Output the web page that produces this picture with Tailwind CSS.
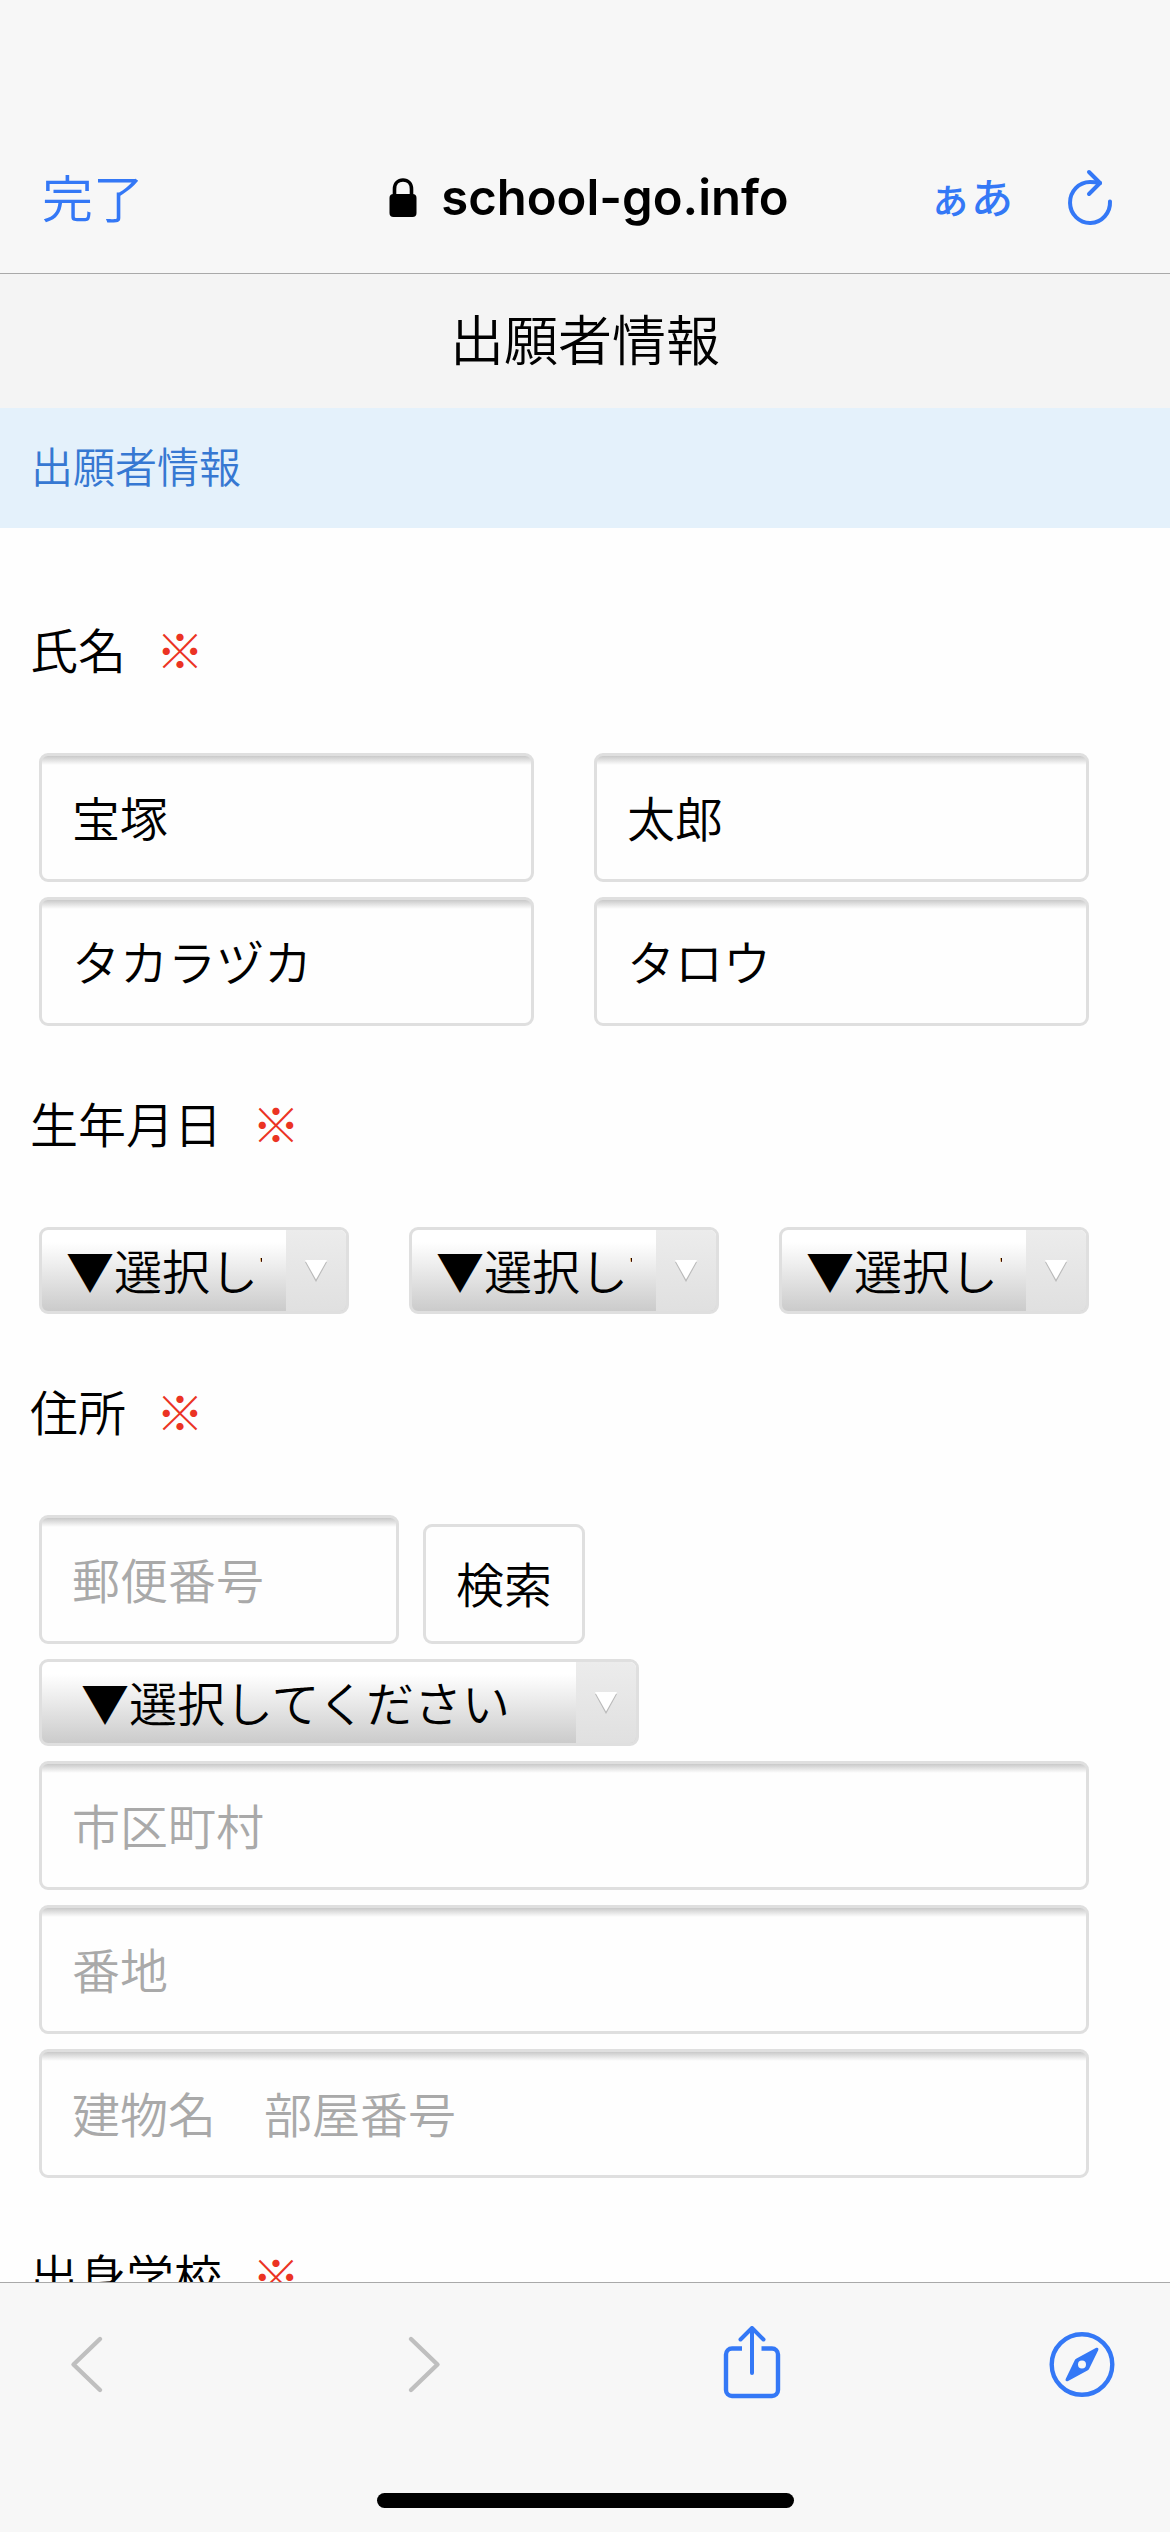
<!DOCTYPE html>
<html lang="ja">
<head>
  <meta charset="UTF-8" />
  <meta name="viewport" content="width=device-width, initial-scale=1" />
  <title>出願者情報</title>
  <script src="https://cdn.jsdelivr.net/npm/@tailwindcss/browser@4"></script>
</head>
<body class="flex h-screen flex-col overflow-hidden bg-[#fefefe] font-['Noto_Sans_CJK_JP',sans-serif] text-[48px] leading-[72px] font-[350] text-black">
  <!-- Browser bar -->
  <header class="shrink-0 border-b border-[#a9a9a9] bg-[#f7f7f7] pt-[123px]">
    <div class="grid h-[150px] grid-cols-[1fr_auto_1fr] items-center px-[42px]">
      <button type="button" class="justify-self-start pb-1 text-[51px] text-[#3478f6]">完了</button>
      <div class="flex items-center gap-6 pl-2">
        <svg class="h-10 w-7" viewBox="0 0 28 40" fill="none">
          <rect x="0.5" y="16" width="27" height="23" rx="4" fill="#000" />
          <path d="M5.500 18V11C5.500 5.500 9 2 14 2s8.500 3.500 8.500 9v7" stroke="#000" stroke-width="3.600" />
        </svg>
        <span class="font-[Inter,sans-serif] text-[49px] font-semibold">school-go.info</span>
      </div>
      <div class="mr-[15px] flex items-center justify-self-end gap-[54px] text-[#3478f6]">
        <button type="button" aria-label="表示設定" class="pb-1 text-[42px] font-medium">ぁあ</button>
        <button type="button" aria-label="再読み込み">
          <svg class="h-[60px] w-[46px]" viewBox="0 0 46 60" fill="none" stroke="currentColor" stroke-width="4" stroke-linecap="round" stroke-linejoin="round">
            <path d="M43 33.500A20 20.500 0 1 1 23 14q5 0 10 1" />
            <path d="M22 4 33 15 22 26" />
          </svg>
        </button>
      </div>
    </div>
  </header>

  <!-- Page -->
  <main class="min-h-0 flex-1 overflow-hidden">
    <h1 class="bg-[#f4f4f4] pt-7 pb-[34px] text-center text-[54px]">出願者情報</h1>
    <h2 class="bg-[#e4f1fb] px-[31px] pt-[21px] pb-[27px] text-[42px] text-[#3678d2]">出願者情報</h2>

    <form class="pt-6">
      <!-- Name -->
      <section class="pt-[60px]">
        <div class="flex gap-[30px] px-[30px]"><label for="sei">氏名</label><span class="text-[#eb3323]">※</span></div>
        <div class="mt-[69px] mr-[81px] ml-[39px] grid grid-cols-2 gap-x-[60px] gap-y-[15px]">
          <input id="sei" type="text" value="宝塚" class="h-[129px] w-full min-w-0 rounded-[9px] border-3 border-[#dfdfdf] bg-[linear-gradient(#c9c9c9,#fefefe_9px)] px-[30px] pb-1" />
          <input aria-label="名" type="text" value="太郎" class="h-[129px] w-full min-w-0 rounded-[9px] border-3 border-[#dfdfdf] bg-[linear-gradient(#c9c9c9,#fefefe_9px)] px-[30px] pb-1" />
          <input aria-label="セイ" type="text" value="タカラヅカ" class="h-[129px] w-full min-w-0 rounded-[9px] border-3 border-[#dfdfdf] bg-[linear-gradient(#c9c9c9,#fefefe_9px)] px-[30px] pb-1" />
          <input aria-label="メイ" type="text" value="タロウ" class="h-[129px] w-full min-w-0 rounded-[9px] border-3 border-[#dfdfdf] bg-[linear-gradient(#c9c9c9,#fefefe_9px)] px-[30px] pb-1" />
        </div>
      </section>

      <!-- Birthday -->
      <section class="pt-[60px]">
        <div class="flex gap-[30px] px-[30px]"><label for="year">生年月日</label><span class="text-[#eb3323]">※</span></div>
        <div class="mt-[69px] mr-[81px] ml-[39px] grid grid-cols-3 gap-[60px]">
          <div class="relative">
            <select id="year" class="block h-[87px] w-full appearance-none rounded-[9px] border-3 border-[#dfdfdf] bg-linear-to-b from-white from-15% to-[#cbcbcb] pr-[84px] pb-1 pl-6">
              <option>▼選択してください</option>
            </select>
            <span class="pointer-events-none absolute inset-y-[3px] right-[3px] flex w-[60px] items-center justify-center rounded-r-[6px] bg-linear-to-b from-[#ececec] to-[#e0e0e0]">
              <svg class="h-[22px] w-[22px]" viewBox="0 0 22 22"><path d="M0 2h22L11 22z" fill="#b9b9b9" /><path d="M0 0h22L11 19.500z" fill="#fff" /></svg>
            </span>
          </div>
          <div class="relative">
            <select aria-label="月" class="block h-[87px] w-full appearance-none rounded-[9px] border-3 border-[#dfdfdf] bg-linear-to-b from-white from-15% to-[#cbcbcb] pr-[84px] pb-1 pl-6">
              <option>▼選択してください</option>
            </select>
            <span class="pointer-events-none absolute inset-y-[3px] right-[3px] flex w-[60px] items-center justify-center rounded-r-[6px] bg-linear-to-b from-[#ececec] to-[#e0e0e0]">
              <svg class="h-[22px] w-[22px]" viewBox="0 0 22 22"><path d="M0 2h22L11 22z" fill="#b9b9b9" /><path d="M0 0h22L11 19.500z" fill="#fff" /></svg>
            </span>
          </div>
          <div class="relative">
            <select aria-label="日" class="block h-[87px] w-full appearance-none rounded-[9px] border-3 border-[#dfdfdf] bg-linear-to-b from-white from-15% to-[#cbcbcb] pr-[84px] pb-1 pl-6">
              <option>▼選択してください</option>
            </select>
            <span class="pointer-events-none absolute inset-y-[3px] right-[3px] flex w-[60px] items-center justify-center rounded-r-[6px] bg-linear-to-b from-[#ececec] to-[#e0e0e0]">
              <svg class="h-[22px] w-[22px]" viewBox="0 0 22 22"><path d="M0 2h22L11 22z" fill="#b9b9b9" /><path d="M0 0h22L11 19.500z" fill="#fff" /></svg>
            </span>
          </div>
        </div>
      </section>

      <!-- Address -->
      <section class="pt-[60px]">
        <div class="flex gap-[30px] px-[30px]"><label for="zip">住所</label><span class="text-[#eb3323]">※</span></div>
        <div class="mt-[69px] mr-[81px] ml-[39px] flex flex-col gap-[15px]">
          <div class="flex items-end gap-6">
            <input id="zip" type="text" placeholder="郵便番号" class="h-[129px] w-[360px] rounded-[9px] border-3 border-[#dfdfdf] bg-[linear-gradient(#c9c9c9,#fefefe_9px)] px-[30px] pb-1 placeholder:text-[#a9a9a9]" />
            <button type="button" class="h-[120px] rounded-[9px] border-3 border-[#dfdfdf] bg-[#fefefe] px-[30px] pb-1">検索</button>
          </div>
          <div class="relative w-[600px]">
            <select aria-label="都道府県" class="block h-[87px] w-full appearance-none rounded-[9px] border-3 border-[#dfdfdf] bg-linear-to-b from-white from-15% to-[#cbcbcb] pr-[84px] pb-1 pl-[39px]">
              <option>▼選択してください</option>
            </select>
            <span class="pointer-events-none absolute inset-y-[3px] right-[3px] flex w-[60px] items-center justify-center rounded-r-[6px] bg-linear-to-b from-[#ececec] to-[#e0e0e0]">
              <svg class="h-[22px] w-[22px]" viewBox="0 0 22 22"><path d="M0 2h22L11 22z" fill="#b9b9b9" /><path d="M0 0h22L11 19.500z" fill="#fff" /></svg>
            </span>
          </div>
          <input aria-label="市区町村" type="text" placeholder="市区町村" class="h-[129px] w-full rounded-[9px] border-3 border-[#dfdfdf] bg-[linear-gradient(#c9c9c9,#fefefe_9px)] px-[30px] pb-1 placeholder:text-[#a9a9a9]" />
          <input aria-label="番地" type="text" placeholder="番地" class="h-[129px] w-full rounded-[9px] border-3 border-[#dfdfdf] bg-[linear-gradient(#c9c9c9,#fefefe_9px)] px-[30px] pb-1 placeholder:text-[#a9a9a9]" />
          <input aria-label="建物名 部屋番号" type="text" placeholder="建物名　部屋番号" class="h-[129px] w-full rounded-[9px] border-3 border-[#dfdfdf] bg-[linear-gradient(#c9c9c9,#fefefe_9px)] px-[30px] pb-1 placeholder:text-[#a9a9a9]" />
        </div>
      </section>

      <!-- School -->
      <section class="pt-[60px]">
        <div class="flex gap-[30px] px-[30px]"><h3>出身学校</h3><span class="text-[#eb3323]">※</span></div>
      </section>
    </form>
  </main>

  <!-- Toolbar -->
  <footer class="shrink-0 border-t border-[#a9a9a9] bg-[#f7f7f7] pb-6">
    <nav class="flex h-[162px] items-center justify-between px-[55px] text-[#3478f6]">
      <button type="button" aria-label="戻る" disabled class="text-[#bfbfbf]">
        <svg class="h-[76px] w-[66px]" viewBox="0 0 66 76" fill="none" stroke="currentColor" stroke-width="4.400" stroke-linecap="round" stroke-linejoin="round"><path d="M45 13 18.500 38.500 45 64" /></svg>
      </button>
      <button type="button" aria-label="進む" disabled class="text-[#bfbfbf]">
        <svg class="h-[76px] w-[66px]" viewBox="0 0 66 76" fill="none" stroke="currentColor" stroke-width="4.400" stroke-linecap="round" stroke-linejoin="round"><path d="M25 13 51.500 38.500 25 64" /></svg>
      </button>
      <button type="button" aria-label="共有">
        <svg class="h-[76px] w-[66px]" viewBox="0 0 66 76" fill="none" stroke="currentColor" stroke-width="4.400">
          <path d="M24 22.500H14a6 6 0 0 0-6 6V64a6 6 0 0 0 6 6h40a6 6 0 0 0 6-6V28.500a6 6 0 0 0-6-6H43.500" />
          <path d="M34 47V2.500M22.500 13.500 34 2 45.500 13.500" stroke-width="4" stroke-linecap="round" stroke-linejoin="round" />
        </svg>
      </button>
      <button type="button" aria-label="Safariで開く">
        <svg class="h-[76px] w-[66px]" viewBox="0 0 66 76" fill="none">
          <circle cx="33" cy="38.500" r="30.300" stroke="currentColor" stroke-width="4.400" />
          <path fill="currentColor" fill-rule="evenodd" d="M46.800 22.100c1.900-1 3.300.2 2.300 2.300L40.300 42.500c-.4.900-1 1.600-1.900 2L19.100 54.900c-1.900 1-3.200-.3-2.300-2.200l8.800-18.200c.4-.9 1-1.500 1.900-2zM33 34.500a4 4 0 1 0 0 8 4 4 0 0 0 0-8z" />
        </svg>
      </button>
    </nav>
    <div class="mx-auto mt-12 h-[15px] w-[417px] rounded-full bg-black"></div>
  </footer>
</body>
</html>
